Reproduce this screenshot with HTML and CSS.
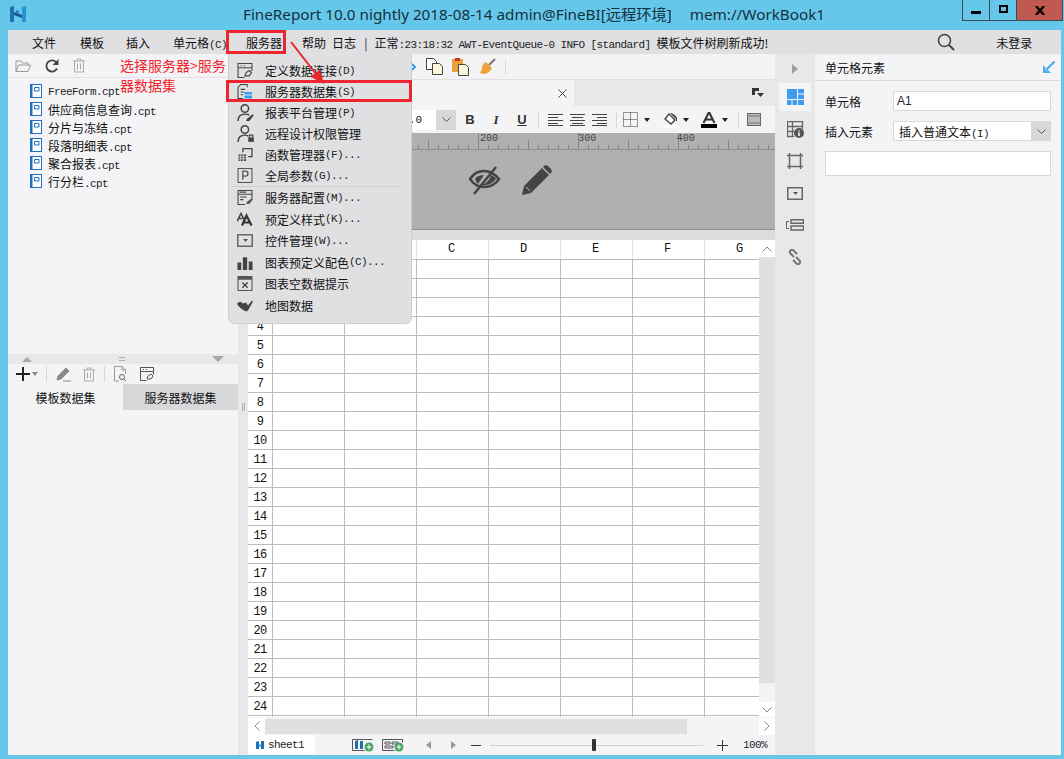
FILE: index.html
```html
<!DOCTYPE html>
<html lang="zh">
<head>
<meta charset="utf-8">
<title>FineReport</title>
<link rel="stylesheet" href="styles.css">
</head>
<body>
<div class="window">
  <header class="titlebar">
    <svg class="logo" viewBox="0 0 16 16"><path fill="#1f6fb5" d="M0 1l4-1v16H0z"/><path fill="#2d8fd6" d="M12 1l4-1v16h-4z"/><path fill="#15558f" d="M4 6l8 3v3L4 9z"/><path fill="#2a84cc" d="M6 4l3 1v3L6 7z"/></svg>
    <div class="title"><span>FineReport 10.0 nightly 2018-08-14 admin@FineBI[远程环境]</span><span>mem://WorkBook1</span></div>
    <div class="winctl">
      <div class="winbtn"><i class="min"></i></div>
      <div class="winbtn"><i class="max"></i></div>
      <div class="winbtn close"><svg width="10" height="9" viewBox="0 0 10 9"><path d="M1 0l8 9M9 0L1 9" stroke="#000" stroke-width="2.4"/></svg></div>
    </div>
  </header>

  <div class="client">
    <nav class="menubar">
      <span class="m m-file">文件</span>
      <span class="m m-tpl">模板</span>
      <span class="m m-ins">插入</span>
      <span class="m m-cell">单元格<b class="lat">(C)</b></span>
      <span class="m m-srv">服务器</span>
      <span class="m m-help">帮助</span>
      <span class="m m-log">日志</span>
      <span class="m m-bar">|</span>
      <span class="m m-status">正常<b class="lat">:23:18:32 AWT-EventQueue-0 INFO [standard] </b>模板文件树刷新成功!</span>
      <svg class="m-search" width="20" height="20" viewBox="0 0 20 20"><circle cx="8.5" cy="8.5" r="6" fill="none" stroke="#444" stroke-width="1.6"/><path d="M13 13l5 5" stroke="#444" stroke-width="2"/></svg>
      <span class="m m-login">未登录</span>
    </nav>

    <div class="workspace">
      <aside class="left">
        <div class="left-tools">
          <svg width="16" height="14" viewBox="0 0 16 14"><path d="M1 12.5V2h5l1.5 2H13v2M1 12.5L3.5 6h12L13 12.5z" fill="none" stroke="#9a9a9a"/></svg>
          <svg width="16" height="16" viewBox="0 0 16 16"><path d="M13 10.5A5.6 5.6 0 1 1 12 4" fill="none" stroke="#444" stroke-width="1.8"/><path d="M14.5 1v6h-6z" fill="#444"/></svg>
          <svg width="14" height="15" viewBox="0 0 14 15"><path d="M1 3h12M5 3V1h4v2M2.500 3v11h9V3M5.500 5.500v6M8.500 5.500v6" fill="none" stroke="#aaa"/></svg>
        </div>
        <ul class="files">
          <li><svg class="fi" viewBox="0 0 12 14"><rect x=".5" y=".5" width="11" height="13" fill="#fff" stroke="#1f6fc4"/><path d="M1.500 1v12" stroke="#1f6fc4" stroke-width="2"/><path d="M4.500 3.500h4.500v3.500H4.500z" fill="none" stroke="#1f6fc4"/></svg><b class="lat">FreeForm.cpt</b></li>
          <li><svg class="fi" viewBox="0 0 12 14"><rect x=".5" y=".5" width="11" height="13" fill="#fff" stroke="#1f6fc4"/><path d="M1.500 1v12" stroke="#1f6fc4" stroke-width="2"/><path d="M4.500 3.500h4.500v3.500H4.500z" fill="none" stroke="#1f6fc4"/></svg><span>供应商信息查询<b class="lat">.cpt</b></span></li>
          <li><svg class="fi" viewBox="0 0 12 14"><rect x=".5" y=".5" width="11" height="13" fill="#fff" stroke="#1f6fc4"/><path d="M1.500 1v12" stroke="#1f6fc4" stroke-width="2"/><path d="M4.500 3.500h4.500v3.500H4.500z" fill="none" stroke="#1f6fc4"/></svg><span>分片与冻结<b class="lat">.cpt</b></span></li>
          <li><svg class="fi" viewBox="0 0 12 14"><rect x=".5" y=".5" width="11" height="13" fill="#fff" stroke="#1f6fc4"/><path d="M1.500 1v12" stroke="#1f6fc4" stroke-width="2"/><path d="M4.500 3.500h4.500v3.500H4.500z" fill="none" stroke="#1f6fc4"/></svg><span>段落明细表<b class="lat">.cpt</b></span></li>
          <li><svg class="fi" viewBox="0 0 12 14"><rect x=".5" y=".5" width="11" height="13" fill="#fff" stroke="#1f6fc4"/><path d="M1.500 1v12" stroke="#1f6fc4" stroke-width="2"/><path d="M4.500 3.500h4.500v3.500H4.500z" fill="none" stroke="#1f6fc4"/></svg><span>聚合报表<b class="lat">.cpt</b></span></li>
          <li><svg class="fi" viewBox="0 0 12 14"><rect x=".5" y=".5" width="11" height="13" fill="#fff" stroke="#1f6fc4"/><path d="M1.500 1v12" stroke="#1f6fc4" stroke-width="2"/><path d="M4.500 3.500h4.500v3.500H4.500z" fill="none" stroke="#1f6fc4"/></svg><span>行分栏<b class="lat">.cpt</b></span></li>
        </ul>
        <div class="left-split">
          <i class="tri-up"></i>
          <i class="equals"></i>
          <i class="tri-down"></i>
        </div>
        <div class="ds-tools">
          <svg width="16" height="16" viewBox="0 0 16 16"><path d="M8 1v14M1 8h14" stroke="#222" stroke-width="2"/></svg>
          <i class="caret caret-gray"></i>
          <i class="tsep"></i>
          <svg class="ds-pen" width="16" height="16" viewBox="0 0 16 16"><path d="M1 14l1-4 8-8 3 3-8 8zM7 15h8" fill="#8a8a8a" stroke="#8a8a8a"/></svg>
          <svg class="ds-trash" width="14" height="15" viewBox="0 0 14 15"><path d="M1 3h12M5 3V1h4v2M2.500 3v11h9V3M5.500 5.500v6M8.500 5.500v6" fill="none" stroke="#aaa"/></svg>
          <i class="tsep"></i>
          <svg class="ds-doc" width="14" height="16" viewBox="0 0 14 16"><path d="M6 15H1.500V.5H9L12.500 4v4M9 .5V4h3.500" fill="none" stroke="#999"/><circle cx="9" cy="11" r="2.500" fill="none" stroke="#666"/><path d="M11 13l2 2" stroke="#666"/></svg>
          <svg class="ds-conn" width="14" height="14" viewBox="0 0 14 14"><path d="M.5.500h13v4h-13zM.5 4.500v9h6M13.500 4.500v3M3 2.500h1M6 2.500h1" fill="none" stroke="#555"/><path d="M7 12l1-3 3-2 2 2-2 3z" fill="none" stroke="#555"/></svg>
        </div>
        <div class="ds-tabs">
          <div class="ds-tab">模板数据集</div>
          <div class="ds-tab ds-tab-on">服务器数据集</div>
        </div>
      </aside>

      <div class="splitter"><i></i></div>

      <main class="center">
        <div class="top-tools">
          <svg class="t-frag" width="6" height="8" viewBox="0 0 6 8"><path d="M1 1l3 3-3 3" fill="none" stroke="#3a9be8" stroke-width="2"/></svg>
          <svg width="17" height="17" viewBox="0 0 17 17"><path d="M.5.500h7l3 3v8h-10z" fill="#fff" stroke="#444"/><path d="M6.500 5.500h7l3 3v8h-10z" fill="#fbf6d9" stroke="#444"/></svg>
          <svg width="17" height="18" viewBox="0 0 17 18"><rect y="1" width="11" height="13" fill="#e9a23b"/><rect x="3" width="5" height="3" fill="#c0392b"/><path d="M6.500 6.500h7l3 3v8h-10z" fill="#fbf6d9" stroke="#444"/></svg>
          <svg width="17" height="17" viewBox="0 0 17 17"><path d="M10 7l6-6" stroke="#777" stroke-width="2"/><path d="M7 4l6 6c-1 3-5 6-8 6-1 0-4-1-5-2 2 0 3-2 3-4 0-3 2-5 4-6z" fill="#eda33c"/></svg>
          <i class="tsep tsep-top"></i>
        </div>

        <div class="tabbar">
          <div class="doc-tab"><svg width="9" height="9" viewBox="0 0 9 9"><path d="M.5.500l8 8M8.500.500l-8 8" stroke="#444"/></svg></div>
          <div class="tab-rest"><svg width="12" height="10" viewBox="0 0 12 10"><path d="M0 0h7v3H3v4H0z" fill="#333"/><path d="M5 5h7l-3.500 4z" fill="#333"/></svg></div>
        </div>

        <div class="format">
          <div class="fcombo"><span class="fsize">.0</span><span class="fdrop"><svg width="9" height="5" viewBox="0 0 9 5"><path d="M.5.500l4 4 4-4" fill="none" stroke="#555"/></svg></span></div>
          <span class="fb w26 fb-b">B</span>
          <span class="fb w26 fb-i">I</span>
          <span class="fb w26 fb-u">U</span>
          <i class="tsep fs1"></i>
          <span class="fb w22"><svg width="15" height="12" viewBox="0 0 15 12"><path d="M0 .5h15M0 3.500h10M0 6.500h15M0 9.500h10M0 11.500h15" stroke="#444"/></svg></span>
          <span class="fb w22"><svg width="15" height="12" viewBox="0 0 15 12"><path d="M0 .5h15M2 3.500h11M0 6.500h15M2 9.500h11M0 11.500h15" stroke="#444"/></svg></span>
          <span class="fb w22"><svg width="15" height="12" viewBox="0 0 15 12"><path d="M0 .5h15M5 3.500h10M0 6.500h15M5 9.500h10M0 11.500h15" stroke="#444"/></svg></span>
          <i class="tsep fs2"></i>
          <span class="fb w20"><svg width="15" height="15" viewBox="0 0 15 15"><path d="M.5.500h14v14H.5zM7.500.500v14M.5 7.500h14" fill="none" stroke="#333" stroke-dasharray="1 1"/></svg></span>
          <i class="caret fc1"></i>
          <span class="fb w20 fp"><svg width="16" height="16" viewBox="0 0 16 16"><rect y="13" width="16" height="3" fill="#fff"/><path d="M6 2l6 6-4 4-6-5z" fill="#fff" stroke="#444" stroke-width="1.400"/><path d="M7 1c2 0 6 2 7 5v3h-1V7z" fill="#444"/></svg></span>
          <i class="caret fc2"></i>
          <span class="fb w20 fa"><svg width="16" height="16" viewBox="0 0 16 16"><path d="M2.500 11L8 0l5.500 11M4.500 7.500h7" fill="none" stroke="#333" stroke-width="2"/><rect y="12" width="16" height="4" fill="#000"/></svg></span>
          <i class="caret fc3"></i>
          <i class="tsep fs3"></i>
          <span class="fb w20 fm"><svg width="14" height="13" viewBox="0 0 14 13"><rect x=".5" y=".5" width="13" height="12" fill="#bbb" stroke="#666"/><path d="M0 3h14M0 10h14" stroke="#777"/></svg></span>
        </div>

        <div class="ruler"><span>200</span><span>300</span><span>400</span></div>

        <div class="canvas">
          <svg width="32" height="32" viewBox="0 0 32 32"><path d="M1 15c4-6 9-8 14-8s10 2 15 8c-4 6-9 8-15 8S5 21 1 15z" fill="none" stroke="#444" stroke-width="2.500"/><path d="M6 15c2-3 5-4 9-4l-6 9c-1-1-2-3-3-5z M22 11c-1 5-5 9-10 10 6 1 11-1 15-6-1-2-3-3-5-4z" fill="#444"/><path d="M5 30L27 3" stroke="#444" stroke-width="2.500"/></svg>
          <svg width="32" height="32" viewBox="0 0 32 32"><path d="M1 31l2-9L21 4l7 7-18 18zM23 2c1-1 3-1 4 0l3 3c1 1 1 3 0 4l-1 1-7-7z" fill="#444"/><path d="M5 23l4 4" stroke="#b0b0b0" stroke-width="1"/></svg>
        </div>
        <div class="band"></div>

        <div class="sheet">
          <div class="cells">
            <div class="head"><span></span><span></span><span></span><span>C</span><span>D</span><span>E</span><span>F</span><span>G</span></div>
            <div class="row"><span></span></div><div class="row"><span></span></div><div class="row"><span></span></div><div class="row"><span>4</span></div><div class="row"><span>5</span></div><div class="row"><span>6</span></div><div class="row"><span>7</span></div><div class="row"><span>8</span></div>
            <div class="row"><span>9</span></div><div class="row"><span>10</span></div><div class="row"><span>11</span></div><div class="row"><span>12</span></div><div class="row"><span>13</span></div><div class="row"><span>14</span></div><div class="row"><span>15</span></div><div class="row"><span>16</span></div>
            <div class="row"><span>17</span></div><div class="row"><span>18</span></div><div class="row"><span>19</span></div><div class="row"><span>20</span></div><div class="row"><span>21</span></div><div class="row"><span>22</span></div><div class="row"><span>23</span></div><div class="row"><span>24</span></div>
          </div>
          <div class="vscroll">
            <div class="sbtn sbtn-up"><svg width="10" height="6" viewBox="0 0 10 6"><path d="M.5 5.500l4.500-4.500 4.500 4.500" fill="none" stroke="#888"/></svg></div>
            <div class="vthumb"></div>
            <div class="sbtn sbtn-down"><svg width="10" height="6" viewBox="0 0 10 6"><path d="M.5.500L5 5l4.500-4.500" fill="none" stroke="#888"/></svg></div>
          </div>
        </div>

        <div class="hscroll">
          <div class="hbtn"><svg width="6" height="10" viewBox="0 0 6 10"><path d="M5.500.500L1 5l4.500 4.500" fill="none" stroke="#888"/></svg></div>
          <div class="hthumb"></div>
          <div class="hbtn hbtn-r"><svg width="6" height="10" viewBox="0 0 6 10"><path d="M.5.500L5 5 .5 9.500" fill="none" stroke="#888"/></svg></div>
        </div>

        <div class="sheetbar">
          <div class="sheet-tab"><svg width="8" height="8" viewBox="0 0 8 8"><path d="M0 1l3-1v8H0zM5 0h3v8H5z" fill="#1f6fb5"/><path d="M3 3l2 1v2L3 5z" fill="#3a9be8"/></svg><b class="lat">sheet1</b></div>
          <svg class="add add1" width="23" height="14" viewBox="0 0 23 14"><path d="M.5 1.500h20M.5 1.500v11h12" fill="none" stroke="#555"/><path d="M3 3l3-1v9H3zM8 3h3v8H8z" fill="#1f6fb5"/><circle cx="17" cy="9" r="4.500" fill="#4aa564"/><path d="M17 6.500v5M14.500 9h5" stroke="#fff"/></svg>
          <svg class="add add2" width="23" height="14" viewBox="0 0 23 14"><path d="M.5 1.500h20v3M.5 1.500v11h12M3 4h5v2H3zM10 4h6v2h-6zM3 8h8v2H3z" fill="none" stroke="#555"/><circle cx="17" cy="9" r="4.500" fill="#4aa564"/><path d="M17 6.500v5M14.500 9h5" stroke="#fff"/></svg>
          <i class="nav-l"></i>
          <i class="nav-r"></i>
          <i class="zoom-minus"></i>
          <div class="slider"><i></i></div>
          <svg class="zoom-plus" width="11" height="11" viewBox="0 0 11 11"><path d="M5.500 0v11M0 5.500h11" stroke="#333"/></svg>
          <b class="lat zoom-val">100%</b>
        </div>
      </main>

      <div class="strip">
        <div class="strip-head"><i></i></div>
        <div class="sb sb-on"><svg width="17" height="16" viewBox="0 0 17 16"><path d="M0 0h10v10H0zM11 0h6v4.500h-6zM11 5.500h6V10h-6zM0 11h4.500v5H0zM5.500 11h4.500v5H5.500zM11 11h6v5h-6z" fill="#3f9cf0"/></svg></div>
        <div class="sb"><svg width="17" height="17" viewBox="0 0 17 17"><path d="M7 15.500H.5V.5h15V8M.5 5.500h15M5.500.500v15M.5 10.500h7" fill="none" stroke="#666" stroke-width="1.300"/><circle cx="12" cy="12" r="5" fill="#555"/><path d="M12 9.500v1M12 11.500v3.500" stroke="#fff" stroke-width="1.500"/></svg></div>
        <div class="sb"><svg width="16" height="16" viewBox="0 0 16 16"><path d="M2.500 0v16M13.500 0v16M0 2.500h16M0 13.500h16" stroke="#666" stroke-width="1.500"/></svg></div>
        <div class="sb"><svg width="16" height="13" viewBox="0 0 16 13"><rect x=".75" y=".75" width="14.500" height="11.500" fill="none" stroke="#666" stroke-width="1.500"/><path d="M6 5h5L8.500 8z" fill="#555"/></svg></div>
        <div class="sb"><svg width="18" height="12" viewBox="0 0 18 12"><path d="M3 2.500H.5v7H3" fill="none" stroke="#666"/><path d="M5 .75h12.500v3.500H5zM5 7h12.500v4H5z" fill="none" stroke="#666" stroke-width="1.400"/></svg></div>
        <div class="sb"><svg width="16" height="16" viewBox="0 0 16 16"><path d="M7 8L3.500 4.500a2 2 0 0 1 3-3L10 5M9 8l3.500 3.500a2 2 0 0 1-3 3L6 11" fill="none" stroke="#777" stroke-width="2"/></svg></div>
      </div>

      <aside class="right">
        <div class="right-head"><span>单元格元素</span><svg width="12" height="12" viewBox="0 0 12 12"><path d="M11.500.500L3 9" stroke="#49b0ec" stroke-width="2.200"/><path d="M0 4v8h8l-2.500-2.500H2.500v-3z" fill="#49b0ec"/></svg></div>
        <div class="right-body">
          <div class="field"><label>单元格</label><div class="inp"><span class="sans">A1</span></div></div>
          <div class="field"><label>插入元素</label><div class="inp combo"><span class="combo-text">插入普通文本<b class="lat">(I)</b></span><span class="combo-drop"><svg width="9" height="5" viewBox="0 0 9 5"><path d="M.5.500l4 4 4-4" fill="none" stroke="#555"/></svg></span></div></div>
          <div class="area"></div>
        </div>
      </aside>
    </div>
  </div>

  <!-- 服务器 drop-down menu, over the workspace -->
  <div class="menu">
    <div class="mi"><svg viewBox="0 0 14 14"><path d="M.5.500h13v4h-13zM.5 4.500v9h6M13.500 4.500v3M3 2.500h1M6 2.500h1" fill="none" stroke="#444"/><path d="M7 12l1-3 3-2 2 2-2 3z" fill="none" stroke="#444"/></svg>定义数据连接<b class="lat">(D)</b></div>
    <div class="mi"><svg viewBox="0 0 14 14"><path d="M9 3V.5H3L.5 3v10.500H5M3 5h4M3 7.500h3M3 10h2" fill="none" stroke="#444"/><path d="M6.500 7.500h7v2.300h-7zM6.500 10.700h7v2.800h-7z" fill="#3f9cf0"/></svg>服务器数据集<b class="lat">(S)</b></div>
    <div class="mi mi-big"><svg viewBox="0 0 16 16"><circle cx="7" cy="4" r="3.300" fill="none" stroke="#444" stroke-width="1.300"/><path d="M1 15c0-4 2-6 6-6 2 0 3 0 4 1" fill="none" stroke="#444" stroke-width="1.300"/><path d="M8 15l1-2 5-4 1 1-4 5z" fill="#444"/></svg>报表平台管理<b class="lat">(P)</b></div>
    <div class="mi mi-big"><svg viewBox="0 0 16 16"><circle cx="7" cy="4" r="3.300" fill="none" stroke="#444" stroke-width="1.300"/><path d="M1 15c0-4 2-6 6-6 1 0 2 0 3 1" fill="none" stroke="#444" stroke-width="1.300"/><rect x="10" y="11" width="5" height="4" fill="#444"/><path d="M11 11V9h3v2" fill="none" stroke="#444"/></svg>远程设计权限管理</div>
    <div class="mi"><svg viewBox="0 0 14 14"><path d="M5 5V1.500h8.500V9H10" fill="none" stroke="#444" stroke-width="1.200"/><path d="M1 7h7v6H1z" fill="#444"/><path d="M1 9h7M1 11h7M3 7v6M5.500 7v6" stroke="#e0e0e2" stroke-width=".8"/></svg>函数管理器<b class="lat">(F)...</b></div>
    <div class="mi"><svg viewBox="0 0 14 14"><rect x=".5" y=".5" width="13" height="13" fill="none" stroke="#555"/><path d="M5 11V3h2.500a2 2 0 0 1 0 4.500H5" fill="none" stroke="#555" stroke-width="1.200"/></svg>全局参数<b class="lat">(G)...</b></div>
    <div class="msep"></div>
    <div class="mi mi2"><svg viewBox="0 0 14 14"><path d="M.5.500h13v9M.5.500v13H7M.5 4h13M2 2h6M2.500 6.500h6M2.500 9h3" fill="none" stroke="#444"/><path d="M8 13l1-2 4-3 1 1-3 4z" fill="#555"/></svg>服务器配置<b class="lat">(M)...</b></div>
    <div class="mi mi2"><svg viewBox="0 0 16 14"><path d="M0 9L4 1l3 6M1.500 6h4" fill="none" stroke="#444" stroke-width="1.600"/><path d="M5 13L9.500 3 14.500 13M7 10h5.500" fill="none" stroke="#333" stroke-width="2.200"/></svg>预定义样式<b class="lat">(K)...</b></div>
    <div class="mi mi2"><svg viewBox="0 0 16 13"><rect x=".75" y=".75" width="14.500" height="11.500" fill="none" stroke="#666" stroke-width="1.500"/><path d="M6 5h5L8.500 8z" fill="#555"/></svg>控件管理<b class="lat">(W)...</b></div>
    <div class="mi mi2"><svg viewBox="0 0 14 14"><path d="M0 7h3.500v7H0zM5 2h4v12H5zM10.500 6H14v8h-3.500z" fill="#444"/></svg>图表预定义配色<b class="lat">(C)...</b></div>
    <div class="mi mi2"><svg viewBox="0 0 14 14"><path d="M.5.500h13v13H.5z" fill="none" stroke="#555"/><path d="M.5.500h13v3H.5z" fill="#555"/><path d="M4.500 6l5 5M9.500 6l-5 5" stroke="#444" stroke-width="1.200"/></svg>图表空数据提示</div>
    <div class="mi mi2"><svg viewBox="0 0 16 14"><path d="M0 5l3-2 3 2 3-1 2 3 4-5 1 1-5 9-2 1-5-3-3-3z" fill="#444"/></svg>地图数据</div>
  </div>

  <!-- annotations drawn on the screenshot -->
  <div class="note">选择服务器&gt;服务器数据集</div>
  <div class="redbox redbox-top"></div>
  <div class="redbox redbox-item"></div>
  <svg class="red-arrow" width="40" height="50" viewBox="0 0 40 50"><path d="M1 1l25 32" stroke="#e8242c" stroke-width="2"/><path d="M34 43L20.600 35.700 30 28.300z" fill="#e8242c"/></svg>
</div>
</body>
</html>
```
FILE: styles.css
```css
* { box-sizing: border-box; }
html, body { margin: 0; padding: 0; }
body {
  width: 1064px;
  height: 759px;
  overflow: hidden;
  font-family: "Noto Sans CJK SC", "Liberation Sans", sans-serif;
  font-size: 12px;
  color: #111;
}
i { display: block; }
.lat {
  font-family: "Liberation Mono", "DejaVu Sans Mono", monospace;
  font-size: 11px;
  letter-spacing: -0.6px;
  font-weight: normal;
  color: #222;
}

.window {
  position: relative;
  width: 1064px;
  height: 759px;
  background: #65c8ea;
  display: flex;
  flex-direction: column;
}

/* title bar */
.titlebar { height: 30px; display: flex; align-items: flex-start; flex: none; }
.logo { width: 16px; height: 16px; margin: 6px 0 0 10px; flex: none; }
.title {
  margin: 3px 0 0 217px;
  display: flex;
  gap: 18px;
  font-family: "Noto Sans", "Noto Sans CJK SC", sans-serif;
  font-size: 15.250px;
  line-height: 22px;
  color: #16303c;
  white-space: nowrap;
}
.winctl { position: absolute; top: 0; left: 962px; display: flex; height: 21px; border: 1px solid #3c4a52; border-top: 0; }
.winbtn { width: 27px; display: flex; align-items: center; justify-content: center; border-right: 1px solid #3c4a52; }
.winbtn.close { width: 45px; background: #bf5a50; border-right: 0; }
.min { width: 10px; height: 3px; background: #000; margin-top: 5px; }
.max { width: 9px; height: 8px; border: 2px solid #000; margin-top: -3px; }

/* client area */
.client { margin: 0 3px 0 8px; height: 725px; display: flex; flex-direction: column; flex: none; }

.menubar { height: 24px; background: #e0e0e2; display: flex; align-items: center; flex: none; white-space: nowrap; }
.m { flex: none; }
.m-file { margin-left: 24px; }
.m-tpl { margin-left: 24px; }
.m-ins { margin-left: 22px; }
.m-cell { margin-left: 23px; }
.m-srv { margin-left: 19px; }
.m-help { margin-left: 20px; }
.m-log { margin-left: 6px; }
.m-bar { margin-left: 8px; color: #223; }
.m-status { margin-left: 7px; }
.m-search { margin-left: 168px; flex: none; }
.m-login { margin-left: 40px; }

.workspace { flex: 1; display: grid; grid-template-columns: 230px 10px 527px 40px 246px; min-height: 0; }

/* left column */
.left { background: #f4f4f7; display: flex; flex-direction: column; }
.left-tools { height: 24px; display: flex; align-items: center; gap: 12px; padding-left: 7px; border-bottom: 1px solid #e2e2e4; flex: none; }
.left-tools svg:nth-child(2) { margin-left: 1px; }
.files { list-style: none; margin: 0; padding: 4px 0 0 22px; height: 276px; flex: none; }
.files li { height: 18px; display: flex; align-items: center; gap: 6px; white-space: nowrap; }
.files li > .lat { padding-top: 2px; }
.fi { width: 12px; height: 14px; flex: none; }
.left-split { height: 10px; background: #e8e8ea; display: flex; align-items: center; justify-content: space-between; padding: 0 14px; flex: none; }
.tri-up { width: 0; height: 0; border: 5px solid transparent; border-top: 0; border-bottom: 5px solid #a8a8a8; }
.tri-down { width: 0; height: 0; border: 6px solid transparent; border-bottom: 0; border-top: 6px solid #a8a8a8; }
.equals { width: 6px; height: 4px; border-top: 1px solid #aaa; border-bottom: 1px solid #aaa; }
.ds-tools { height: 20px; display: flex; align-items: center; padding-left: 7px; flex: none; }
.caret { width: 0; height: 0; border: 3.500px solid transparent; border-bottom: 0; border-top: 4px solid #222; flex: none; }
.caret-gray { border-top-color: #888; margin-left: 1px; }
.tsep { width: 1px; height: 16px; background: #d8d8d8; flex: none; }
.ds-tools .tsep { margin-left: 8px; }
.ds-pen { margin-left: 9px; }
.ds-trash { margin-left: 10px; }
.ds-doc { margin-left: 8px; }
.ds-conn { margin-left: 13px; }
.ds-tabs { height: 26px; display: grid; grid-template-columns: 115px 115px; flex: none; }
.ds-tab { display: flex; align-items: center; justify-content: center; }
.ds-tab-on { background: #d8d8da; }

.splitter { background: #e8e8ea; display: flex; justify-content: center; padding-top: 349px; }
.splitter i { width: 3px; height: 8px; border-left: 1px solid #aaa; border-right: 1px solid #aaa; }

/* centre column */
.center { display: flex; flex-direction: column; min-width: 0; background: #f4f4f7; }
.top-tools { height: 25px; flex: none; display: flex; align-items: center; padding-left: 163px; background: #f4f4f7; }
.t-frag { margin-right: 9px; }
.top-tools svg:nth-child(3) { margin-left: 9px; }
.top-tools svg:nth-child(4) { margin-left: 10px; }
.tsep-top { margin-left: 9px; }
.tabbar { height: 27px; display: flex; flex: none; border-top: 1px solid #e0e0e2; }
.doc-tab { width: 326px; background: #f4f4f7; display: flex; align-items: center; justify-content: flex-end; padding-right: 7px; }
.tab-rest { flex: 1; background: #e8e8ea; display: flex; align-items: center; justify-content: flex-end; padding-right: 11px; }
.format { height: 27px; display: flex; align-items: center; flex: none; background: #f4f4f7; }
.fcombo { width: 208px; height: 20px; display: flex; background: #fff; margin-right: 1px; }
.fsize { flex: 1; text-align: right; padding-right: 14px; font-family: "Liberation Mono", monospace; font-size: 11px; line-height: 20px; }
.fdrop { width: 20px; background: #d8d8d8; display: flex; align-items: center; justify-content: center; }
.fb { display: flex; align-items: center; justify-content: center; flex: none; font-family: "Liberation Sans", sans-serif; font-size: 13px; color: #333; }
.w26 { width: 26px; }
.w22 { width: 22px; }
.w20 { width: 20px; }
.fb-b { font-weight: bold; }
.fb-i { font-style: italic; font-family: "Liberation Serif", serif; font-weight: bold; }
.fb-u { text-decoration: underline; font-weight: bold; }
.fs1 { margin: 0 5px 0 3px; }
.fs2 { margin: 0 3px 0 6px; }
.fc1 { margin: 0 11px 0 4px; }
.fc2 { margin-left: 2px; }
.fa { margin-left: 10px; }
.fc3 { margin-left: 3px; }
.fs3 { margin: 0 5px 0 10px; }
.ruler {
  height: 17px;
  flex: none;
  padding-left: 232px;
  display: flex;
  background-color: #b0b0b0;
  border-bottom: 1px solid #8e8e8e;
  background-image:
    linear-gradient(90deg, #858585 1px, transparent 1px),
    linear-gradient(90deg, #858585 1px, transparent 1px),
    linear-gradient(90deg, #858585 1px, transparent 1px);
  background-size: 100px 100%, 100px 9px, 10px 4px;
  background-position: 30px 0, 80px 100%, 0 100%;
  background-repeat: repeat-x;
}
.ruler span { width: 100px; font-family: "Liberation Mono", monospace; font-size: 10px; line-height: 12px; color: #444; }
.canvas { height: 80px; flex: none; background: #b0b0b0; border-bottom: 1px solid #8e8e8e; display: flex; align-items: center; gap: 20px; padding: 0 0 20px 221px; }
.band { height: 10px; flex: none; background: #dcdcde; }

.sheet { height: 477px; flex: none; display: flex; }
.cells {
  width: 511px;
  background-color: #fff;
  background-image: repeating-linear-gradient(90deg, #bcbcbc 0 1px, transparent 1px 72px);
  background-position: 24px 0;
  background-size: 100% 100%;
  background-repeat: no-repeat;
}
.head { height: 20px; display: grid; grid-template-columns: 24px repeat(7, 72px); border-bottom: 1px solid #bcbcbc; background: #fff; overflow: hidden; }
.head span { border-left: 1px solid #e4e4e4; text-align: center; font-family: "Liberation Mono", monospace; font-size: 12px; line-height: 19px; padding-right: 2px; }
.head span:first-child { border-left: 0; }
.row { height: 19px; border-bottom: 1px solid #bcbcbc; }
.row span { display: block; width: 24px; height: 18px; background: #fff; text-align: center; font-family: "Liberation Mono", monospace; font-size: 12px; letter-spacing: -0.6px; line-height: 20px; }
.vscroll { width: 16px; display: flex; flex-direction: column; }
.sbtn { height: 17px; width: 16px; background: #fff; display: flex; align-items: center; justify-content: center; flex: none; }
.sbtn-down { height: 15px; margin-top: auto; }
.vthumb { height: 426px; background: #e0e0e0; flex: none; }

.hscroll { height: 18px; flex: none; display: flex; align-items: center; }
.hbtn { width: 17px; height: 17px; background: #fff; display: flex; align-items: center; justify-content: center; flex: none; }
.hbtn-r { margin-left: auto; width: 16px; }
.hthumb { width: 422px; height: 15px; background: #e0e0e0; }

.sheetbar { height: 20px; flex: none; display: flex; align-items: center; }
.sheet-tab { width: 67px; height: 20px; background: #fff; display: flex; align-items: center; gap: 4px; padding-left: 8px; }
.add1 { margin-left: 37px; }
.add2 { margin-left: 7px; }
.nav-l { width: 0; height: 0; margin-left: 21px; border: 4px solid transparent; border-left: 0; border-right: 5px solid #999; }
.nav-r { width: 0; height: 0; margin-left: 20px; border: 4px solid transparent; border-right: 0; border-left: 5px solid #999; }
.zoom-minus { width: 10px; height: 1px; background: #333; margin-left: 15px; }
.slider { width: 213px; height: 14px; margin-left: 9px; display: flex; align-items: center; justify-content: center; background: linear-gradient(#d0d0d0, #d0d0d0) 0 50% / 100% 1px no-repeat; }
.slider i { width: 4px; height: 12px; border-radius: 1px; background: #333; margin-right: 6px; }
.zoom-plus { margin-left: 14px; flex: none; }
.zoom-val { margin-left: 15px; }

/* right strip and panel */
.strip { background: #e8e8ea; display: flex; flex-direction: column; align-items: center; }
.strip-head { height: 29px; flex: none; display: flex; align-items: center; }
.strip-head i { width: 0; height: 0; border: 5px solid transparent; border-right: 0; border-left: 6px solid #a0a0a0; }
.sb { width: 32px; height: 28px; margin-bottom: 4px; display: flex; align-items: center; justify-content: center; flex: none; }
.sb-on { background: #f4f4f7; }
.right { background: #f4f4f7; display: flex; flex-direction: column; }
.right-head { height: 27px; flex: none; display: flex; align-items: center; justify-content: space-between; padding: 0 6px 0 10px; border-bottom: 1px solid #dcdcde; }
.right-body { padding: 10px 10px 0; display: flex; flex-direction: column; gap: 10px; }
.field { display: flex; align-items: center; }
.field label { width: 68px; }
.inp { flex: 1; height: 20px; background: #fff; border: 1px solid #d8d8da; display: flex; align-items: center; padding-left: 3px; }
.sans { font-family: "Liberation Sans", sans-serif; font-size: 12px; color: #223; }
.combo { padding-left: 0; border-right: 0; }
.combo-text { flex: 1; padding-left: 5px; }
.combo-drop { width: 20px; height: 20px; background: #d8d8d8; display: flex; align-items: center; justify-content: center; flex: none; }
.area { height: 25px; background: #fff; border: 1px solid #d8d8da; }

/* overlays */
.menu {
  position: absolute;
  left: 228px;
  top: 54px;
  width: 184px;
  height: 270px;
  padding-top: 6px;
  background: #e0e0e2;
  border-radius: 0 0 6px 6px;
  border: 1px solid #d0d0d2;
  border-top: 0;
}
.mi { height: 21px; display: flex; align-items: center; padding-left: 8px; white-space: nowrap; }
.mi2 { height: 21.500px; }
.mi svg { width: 16px; height: 15px; margin-right: 12px; flex: none; }
.mi-big svg { width: 18px; height: 18px; margin-right: 10px; }
.msep { height: 1px; margin: 0 10px 0 3px; background: #cfcfd1; }
.note {
  position: absolute;
  left: 120px;
  top: 55px;
  width: 108px;
  font-size: 14px;
  line-height: 20px;
  color: #f0242c;
}
.redbox { position: absolute; border: 3px solid #ee2430; }
.redbox-top { left: 226px; top: 30px; width: 60px; height: 24px; }
.redbox-item { left: 226px; top: 80px; width: 186px; height: 22px; }
.red-arrow { position: absolute; left: 290px; top: 41px; }
```
